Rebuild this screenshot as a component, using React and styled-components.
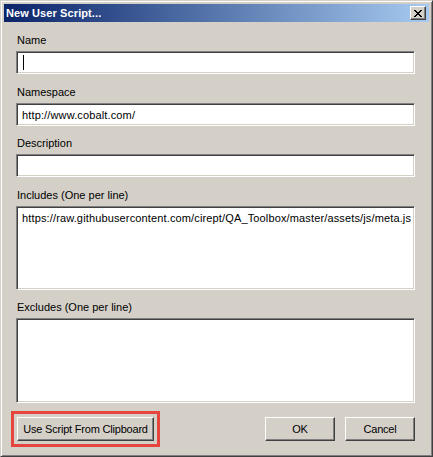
import styled, { createGlobalStyle } from "styled-components";

const Global = createGlobalStyle`
  html, body {
    margin: 0;
    padding: 0;
    background: #d4d0c8;
  }
  body {
    font-family: Tahoma, "Liberation Sans", Arial, sans-serif;
    font-size: 11px;
    color: #000;
  }
`;

const Window = styled.div`
  box-sizing: border-box;
  width: 433px;
  height: 457px;
  background: #d4d0c8;
  border-top: 1px solid #d4d0c8;
  border-left: 1px solid #d4d0c8;
  border-right: 1px solid #404040;
  border-bottom: 1px solid #404040;
  box-shadow: inset 1px 1px #ffffff, inset -1px -1px #808080;
  padding: 3px;
  display: flex;
  flex-direction: column;
`;

const TitleBar = styled.div`
  height: 18px;
  background: linear-gradient(to right, #0a246a, #a6caf0);
  display: flex;
  align-items: center;
  padding: 0 3px 0 2px;
`;

const Title = styled.div`
  flex: 1;
  color: #fff;
  font-weight: bold;
  font-size: 11px;
  letter-spacing: 0.1px;
`;

const CloseButton = styled.div`
  box-sizing: border-box;
  width: 16px;
  height: 14px;
  background: #d4d0c8;
  border-top: 1px solid #fff;
  border-left: 1px solid #fff;
  border-right: 1px solid #404040;
  border-bottom: 1px solid #404040;
  box-shadow: inset -1px -1px #808080;
  display: flex;
  align-items: center;
  justify-content: center;
`;

const Body = styled.div`
  flex: 1;
  display: flex;
  flex-direction: column;
  padding: 12px 14px 0 12px;
`;

const Field = styled.div`
  display: flex;
  flex-direction: column;
  margin-bottom: ${(p) => p.$gap ?? 12}px;
`;

const Label = styled.div`
  line-height: 13px;
  height: 13px;
  padding-left: 1px;
  margin-bottom: 4px;
`;

const TextBox = styled.div`
  box-sizing: border-box;
  height: ${(p) => p.$height}px;
  background: #fff;
  border-top: 1px solid #808080;
  border-left: 1px solid #808080;
  border-right: 1px solid #ffffff;
  border-bottom: 1px solid #ffffff;
  box-shadow: inset 1px 1px #404040, inset -1px -1px #d4d0c8;
  padding: ${(p) => (p.$multi ? "5px 5px" : "0 5px")};
  display: flex;
  align-items: ${(p) => (p.$multi ? "flex-start" : "center")};
  white-space: nowrap;
  overflow: hidden;
  letter-spacing: 0.14px;
`;

const Caret = styled.span`
  display: inline-block;
  width: 1px;
  height: 15px;
  background: #000;
  margin-left: 1px;
`;

const ButtonRow = styled.div`
  display: flex;
  align-items: center;
  padding-left: 1px;
`;

const Button = styled.div`
  box-sizing: border-box;
  height: 24px;
  width: ${(p) => p.$width}px;
  margin-left: ${(p) => p.$left ?? 0}px;
  background: #d4d0c8;
  border-top: 1px solid #fff;
  border-left: 1px solid #fff;
  border-right: 1px solid #404040;
  border-bottom: 1px solid #404040;
  box-shadow: inset -1px -1px #808080;
  display: flex;
  align-items: center;
  justify-content: center;
  letter-spacing: -0.2px;
  outline: ${(p) => (p.$marked ? "3px solid #e5453e" : "none")};
  outline-offset: 3px;
`;

const Spacer = styled.div`
  flex: 1;
`;

export default function App() {
  return (
    <>
      <Global />
      <Window>
        <TitleBar>
          <Title>New User Script...</Title>
          <CloseButton>
            <svg width="8" height="7" viewBox="0 0 8 7" shapeRendering="crispEdges">
              <path
                d="M0 0h2v1h-2zM6 0h2v1h-2zM1 1h2v1h-2zM5 1h2v1h-2zM2 2h4v1h-4zM3 3h2v1h-2zM2 4h4v1h-4zM1 5h2v1h-2zM5 5h2v1h-2zM0 6h2v1h-2zM6 6h2v1h-2z"
                fill="#000"
              />
            </svg>
          </CloseButton>
        </TitleBar>
        <Body>
          <Field>
            <Label>Name</Label>
            <TextBox $height={23}>
              <Caret />
            </TextBox>
          </Field>
          <Field $gap={11}>
            <Label>Namespace</Label>
            <TextBox $height={23}>http://www.cobalt.com/</TextBox>
          </Field>
          <Field>
            <Label>Description</Label>
            <TextBox $height={23}>&nbsp;</TextBox>
          </Field>
          <Field $gap={11}>
            <Label>Includes (One per line)</Label>
            <TextBox $height={84} $multi>
              https://raw.githubusercontent.com/cirept/QA_Toolbox/master/assets/js/meta.js
            </TextBox>
          </Field>
          <Field $gap={14}>
            <Label>Excludes (One per line)</Label>
            <TextBox $height={85} $multi />
          </Field>
          <ButtonRow>
            <Button $width={137} $marked>Use Script From Clipboard</Button>
            <Spacer />
            <Button $width={70}>OK</Button>
            <Button $width={70} $left={10}>Cancel</Button>
          </ButtonRow>
        </Body>
      </Window>
    </>
  );
}
